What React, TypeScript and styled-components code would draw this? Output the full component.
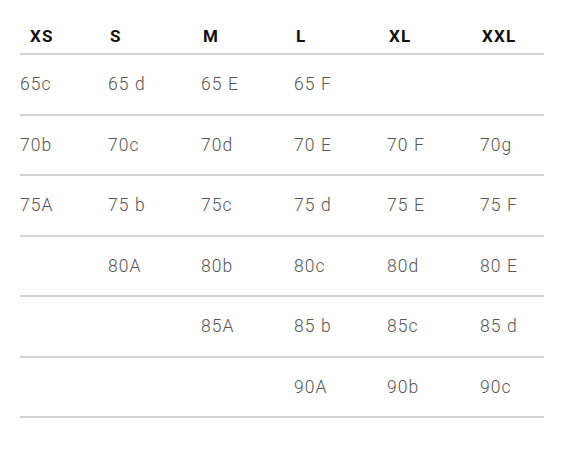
import React from "react";
import styled, { createGlobalStyle } from "styled-components";

const Global = createGlobalStyle`
  html, body { margin: 0; padding: 0; background: #ffffff; }
  body { font-family: Roboto, "Liberation Sans", Arial, sans-serif; }
`;

const Wrap = styled.div`
  padding: 0 32px 0 20px;
  width: 524px;
`;

const Row = styled.div<{ $head?: boolean }>`
  display: grid;
  grid-template-columns: 88px 93px 93px 93px 93px 64px;
  align-items: center;
  height: ${(p) => (p.$head ? "33px" : "58.5px")};
  padding-top: ${(p) => (p.$head ? "20px" : "0")};
  border-bottom: 2px solid #d3d3d3;
  box-sizing: content-box;
`;

const HeadCell = styled.div<{ $indent: number }>`
  font-size: 17px;
  font-weight: 700;
  letter-spacing: 1.2px;
  color: #111111;
  padding-left: ${(p) => p.$indent}px;
  padding-bottom: 2px;
`;

const Cell = styled.div`
  font-size: 17.5px;
  font-weight: 300;
  letter-spacing: 1.1px;
  color: #555555;
  padding-left: 0;
`;

const heads = ["XS", "S", "M", "L", "XL", "XXL"];
const rows: string[][] = [
  ["65c", "65 d", "65 E", "65 F", "", ""],
  ["70b", "70c", "70d", "70 E", "70 F", "70g"],
  ["75A", "75 b", "75c", "75 d", "75 E", "75 F"],
  ["", "80A", "80b", "80c", "80d", "80 E"],
  ["", "", "85A", "85 b", "85c", "85 d"],
  ["", "", "", "90A", "90b", "90c"],
];

export default function App() {
  return (
    <>
      <Global />
      <Wrap>
        <Row $head>
          {heads.map((h, i) => (
            <HeadCell key={h} $indent={i === 0 ? 10 : 2}>
              {h}
            </HeadCell>
          ))}
        </Row>
        {rows.map((r, i) => (
          <Row key={i}>
            {r.map((c, j) => (
              <Cell key={j}>{c}</Cell>
            ))}
          </Row>
        ))}
      </Wrap>
    </>
  );
}
